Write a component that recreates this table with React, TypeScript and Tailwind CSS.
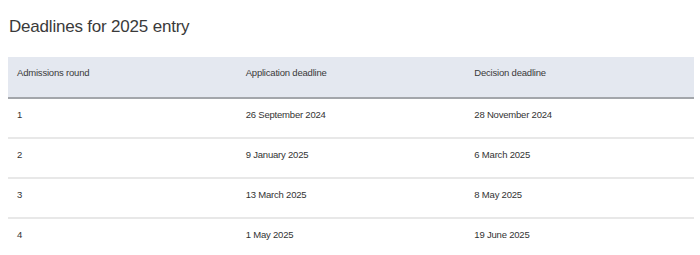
import React from "react";

const rows = [
  ["1", "26 September 2024", "28 November 2024"],
  ["2", "9 January 2025", "6 March 2025"],
  ["3", "13 March 2025", "8 May 2025"],
  ["4", "1 May 2025", "19 June 2025"],
];

export default function App() {
  return (
    <div
      className="w-[700px] h-[255px] overflow-hidden bg-white pl-[8px] pr-[6px] pt-[17px] text-[#333]"
      style={{ fontFamily: '"Liberation Sans", Arial, sans-serif' }}
    >
      <h2 className="text-[17px] leading-[20px] font-normal tracking-[-0.2px] pl-[1px] text-[#3a3a3a]">
        Deadlines for 2025 entry
      </h2>
      <table className="mt-[20px] w-full table-fixed border-collapse text-[9.5px] leading-[12px] tracking-[-0.2px]">
        <thead>
          <tr className="bg-[#e4e8f0] border-b-2 border-[#a3a6ab]">
            <th className="text-left font-normal pl-[9px] pt-[10px] pb-[18px] text-[#3a3a3a]">Admissions round</th>
            <th className="text-left font-normal pl-[9px] pt-[10px] pb-[18px] text-[#3a3a3a]">Application deadline</th>
            <th className="text-left font-normal pl-[9px] pt-[10px] pb-[18px] text-[#3a3a3a]">Decision deadline</th>
          </tr>
        </thead>
        <tbody>
          {rows.map((r) => (
            <tr key={r[0]} className="border-b-2 border-[#e8e8e8]">
              {r.map((c, i) => (
                <td key={i} className="pl-[9px] pt-[10px] pb-[16px] text-[#333]">
                  {c}
                </td>
              ))}
            </tr>
          ))}
        </tbody>
      </table>
    </div>
  );
}
